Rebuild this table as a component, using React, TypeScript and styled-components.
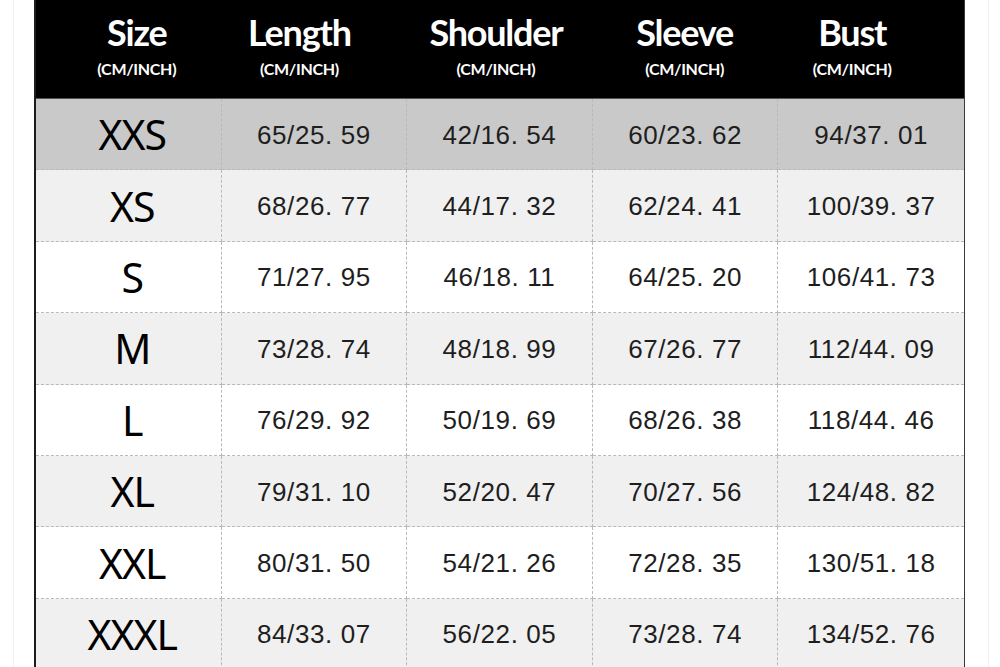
import React from "react";
import styled, { createGlobalStyle } from "styled-components";

const Global = createGlobalStyle`
  html, body { margin: 0; padding: 0; background: #ffffff; }
  body { width: 1000px; height: 667px; overflow: hidden; }
`;

const Frame = styled.div`
  width: 1000px;
  height: 667px;
  box-sizing: border-box;
  padding: 0 35px 0 34px;
  position: relative;
  background: #fff;
  overflow: hidden;
  &::before, &::after {
    content: "";
    position: absolute;
    top: 0;
    bottom: 0;
    width: 1px;
    background: #f1f1f1;
  }
  &::before { left: 13px; }
  &::after { left: 988px; }
`;

const Table = styled.div`
  display: grid;
  grid-template-columns: repeat(5, 1fr);
  grid-template-rows: 99px repeat(8, 71.4px);
  border-left: 2px solid #1c1c1c;
  border-right: 1px solid #3a3a3a;
  font-family: "Lato", "Open Sans", sans-serif;
`;

const HeadCell = styled.div<{ $shift: number }>`
  background: #000;
  color: #fff;
  display: flex;
  flex-direction: column;
  align-items: center;
  justify-content: flex-start;
  padding-top: 11px;
  padding-left: ${(p) => Math.max(0, p.$shift * 2)}px;
  padding-right: ${(p) => Math.max(0, -p.$shift * 2)}px;
  box-sizing: border-box;
  border-bottom: 1px solid #555;
`;

const HeadTitle = styled.div`
  font-weight: 700;
  font-size: 36px;
  line-height: 42px;
  letter-spacing: -1.2px;
`;

const HeadSub = styled.div`
  font-weight: 700;
  font-size: 16px;
  line-height: 20px;
  margin-top: 6px;
  letter-spacing: -0.3px;
`;

const Cell = styled.div<{ $bg: string; $last?: boolean }>`
  background: ${(p) => p.$bg};
  display: flex;
  align-items: center;
  justify-content: center;
  box-sizing: border-box;
  border-bottom: 1px dashed #b9b9b9;
  border-right: ${(p) => (p.$last ? "none" : "1px dashed #b9b9b9")};
`;

const SizeLabel = styled.span`
  font-family: "Noto Sans", "Open Sans", sans-serif;
  font-size: 41px;
  color: #000;
  letter-spacing: -1px;
  padding-left: 8px;
`;

const Num = styled.span`
  font-family: "Liberation Sans", Arial, sans-serif;
  font-size: 26px;
  color: #1e1e1e;
  letter-spacing: 0.6px;
  padding-top: 2px;
`;

const headers: { title: string; shift: number }[] = [
  { title: "Size", shift: 8 },
  { title: "Length", shift: -15 },
  { title: "Shoulder", shift: -4 },
  { title: "Sleeve", shift: -1 },
  { title: "Bust", shift: -19 },
];

const rows: [string, string, string, string, string][] = [
  ["XXS", "65/25. 59", "42/16. 54", "60/23. 62", "94/37. 01"],
  ["XS", "68/26. 77", "44/17. 32", "62/24. 41", "100/39. 37"],
  ["S", "71/27. 95", "46/18. 11", "64/25. 20", "106/41. 73"],
  ["M", "73/28. 74", "48/18. 99", "67/26. 77", "112/44. 09"],
  ["L", "76/29. 92", "50/19. 69", "68/26. 38", "118/44. 46"],
  ["XL", "79/31. 10", "52/20. 47", "70/27. 56", "124/48. 82"],
  ["XXL", "80/31. 50", "54/21. 26", "72/28. 35", "130/51. 18"],
  ["XXXL", "84/33. 07", "56/22. 05", "73/28. 74", "134/52. 76"],
];

const rowBg = (i: number) => (i === 0 ? "#c9c9c9" : i % 2 === 1 ? "#f0f0f0" : "#ffffff");

export default function App() {
  return (
    <>
      <Global />
      <Frame>
        <Table>
          {headers.map((h) => (
            <HeadCell key={h.title} $shift={h.shift}>
              <HeadTitle>{h.title}</HeadTitle>
              <HeadSub>(CM/INCH)</HeadSub>
            </HeadCell>
          ))}
          {rows.map((r, i) =>
            r.map((v, j) => (
              <Cell key={`${i}-${j}`} $bg={rowBg(i)} $last={j === 4}>
                {j === 0 ? <SizeLabel>{v}</SizeLabel> : <Num>{v}</Num>}
              </Cell>
            ))
          )}
        </Table>
      </Frame>
    </>
  );
}
